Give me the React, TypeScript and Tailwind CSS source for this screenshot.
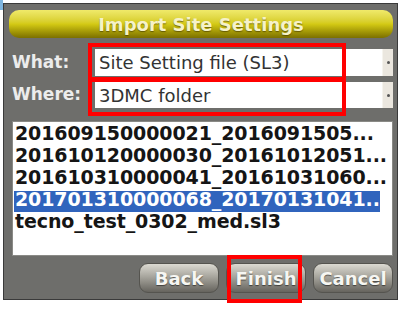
import React from "react";

const rows = [
  "201609150000021_2016091505...",
  "201610120000030_20161012051...",
  "201610310000041_20161031060...",
  "201701310000068_20170131041...",
  "tecno_test_0302_med.sl3",
];

function Select({ text }: { text: string }) {
  return (
    <div className="flex-1 flex bg-white h-full">
      <div className="flex-1 flex items-center pl-[4px] text-[18px] text-[#333333] whitespace-nowrap overflow-hidden">
        {text}
      </div>
      <div className="w-[11px] bg-[#ebe7df] border-l border-[#f6f4ee] flex items-center justify-center">
        <div className="w-[3px] h-[3px] rounded-full bg-[#555555]" />
      </div>
    </div>
  );
}

function Btn({ label }: { label: string }) {
  return (
    <div className="w-[80px] h-[30px] rounded-[9px] bg-linear-to-b from-[#dcdad2] via-[#a2a098] to-[#66645e] border border-[#55544f] flex items-center justify-center text-[18px] font-bold text-[#f6f6f2] [text-shadow:0_1px_1px_rgba(0,0,0,0.5)]">
      {label}
    </div>
  );
}

export default function App() {
  return (
    <div
      className="relative w-[402px] h-[310px] bg-white overflow-hidden"
      style={{ fontFamily: '"DejaVu Sans", sans-serif' }}
    >
      <div className="absolute left-0 top-0 w-[3px] h-[10px] bg-[#7fb6e0]" />
      <div className="ml-[3px] mt-[3px] w-[395px] h-[297px] border border-[#3a3a3a] bg-[#6e6e6b] flex flex-col px-[4px]">
        <div className="mt-[6px] ml-[1px] h-[28px] rounded-[10px] bg-linear-to-b from-[#f0ea6a] via-[#d4ca14] to-[#7c7000] flex items-center justify-center text-[18px] font-bold text-[#f6f2c8] [text-shadow:0_1px_1px_rgba(60,50,0,0.6)]">
          Import Site Settings
        </div>
        <div className="mt-[11px] h-[27px] flex items-center">
          <div className="w-[87px] pl-[4px] text-[17px] font-bold text-[#ececec]">What:</div>
          <Select text="Site Setting file (SL3)" />
        </div>
        <div className="mt-[6px] h-[26px] flex items-center">
          <div className="w-[87px] pl-[4px] text-[17px] font-bold text-[#ececec]">Where:</div>
          <Select text="3DMC folder" />
        </div>
        <div className="mt-[13px] ml-[4px] h-[135px] bg-white border border-[#8a8a86] pt-[2px] pl-[1px] pr-[12px]">
          {rows.map((r, i) => (
            <div key={i} className="h-[22px] flex items-center">
              <span
                className={
                  "h-[21px] block text-[19px] font-bold tracking-[-0.1px] leading-[17px] whitespace-nowrap pl-[1px] " +
                  (i === 3 ? "bg-[#3064bd] text-white w-full" : "text-[#151515]")
                }
              >
                {r}
              </span>
            </div>
          ))}
        </div>
        <div className="mt-[7px] flex justify-end gap-[7px]">
          <Btn label="Back" />
          <Btn label="Finish" />
          <Btn label="Cancel" />
        </div>
      </div>
      <div className="absolute left-[88px] top-[43px] w-[258px] h-[38px] border-[4px] border-[#ff0000]" />
      <div className="absolute left-[88px] top-[78px] w-[258px] h-[38px] border-[4px] border-[#ff0000]" />
      <div className="absolute left-[227px] top-[255px] w-[75px] h-[48px] border-[4px] border-[#ff0000]" />
    </div>
  );
}
